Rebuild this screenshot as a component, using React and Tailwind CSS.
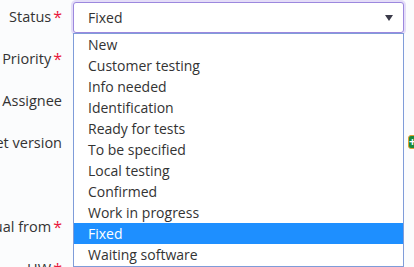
import { useState } from "react";

const statuses = [
  "New",
  "Customer testing",
  "Info needed",
  "Identification",
  "Ready for tests",
  "To be specified",
  "Local testing",
  "Confirmed",
  "Work in progress",
  "Fixed",
  "Waiting software",
];

const rows = [
  { label: "Status", required: true },
  { label: "Priority", required: true },
  { label: "Assignee", required: false },
  { label: "Target version", required: false, addButton: true },
  { label: "", required: false },
  { label: "Actual from", required: true },
  { label: "HW", required: true, value: "HW-1000" },
];

export default function App() {
  const [selected, setSelected] = useState("Fixed");

  return (
    <div
      className="relative w-[414px] h-[267px] overflow-hidden bg-[#fbfcfd] text-[#333] text-[14px]"
      style={{ fontFamily: '"Open Sans", "Noto Sans", sans-serif' }}
    >
      {/* 폼 행들 */}
      <div className="flex flex-col pt-[2px]">
        {rows.map((row, i) => (
          <div key={i} className="flex items-start h-[42px]">
            <div className="w-[62px] shrink-0 flex justify-end whitespace-nowrap pt-[4px] leading-[22px] text-[15px]">
              <span className="text-[14.5px]">{row.label}</span>
              {row.required && <span className="text-[#e8173c] ml-[2px] text-[16px]">*</span>}
            </div>
            <div className="ml-[11px] w-[331px] h-[31px] shrink-0 flex items-center px-[14px] leading-[22px]">
              {row.value}
            </div>
            {row.addButton && (
              <div className="mt-[7px] ml-[4px] w-[14px] h-[14px] rounded-[3px] bg-[#1a8a3c] border border-[#e0a030] flex items-center justify-center text-white text-[12px] font-bold leading-none">
                +
              </div>
            )}
          </div>
        ))}
      </div>

      {/* 상태 선택 */}
      <div className="absolute left-[73px] top-[2px] w-[331px] h-[31px] rounded-[3px] border border-[#9c88de] ring-2 ring-[#e4ddf8] bg-white flex items-center justify-between pl-[14px] pr-[10px] leading-[22px]">
        <span>{selected}</span>
        <svg width="8" height="6" viewBox="0 0 8 6">
          <path d="M0 0 L8 0 L4 6 Z" fill="#3b3b4a" />
        </svg>
      </div>

      {/* 드롭다운 목록 */}
      <div className="absolute left-[73px] top-[33px] w-[331px] h-[234px] border border-[#7f9cd9] bg-white flex flex-col">
        {statuses.map((s) => (
          <div
            key={s}
            onClick={() => setSelected(s)}
            className={`h-[21px] shrink-0 pl-[14px] leading-[21px] whitespace-nowrap ${
              s === selected ? "bg-[#1e8fff] text-white" : ""
            }`}
          >
            {s}
          </div>
        ))}
      </div>
    </div>
  );
}
